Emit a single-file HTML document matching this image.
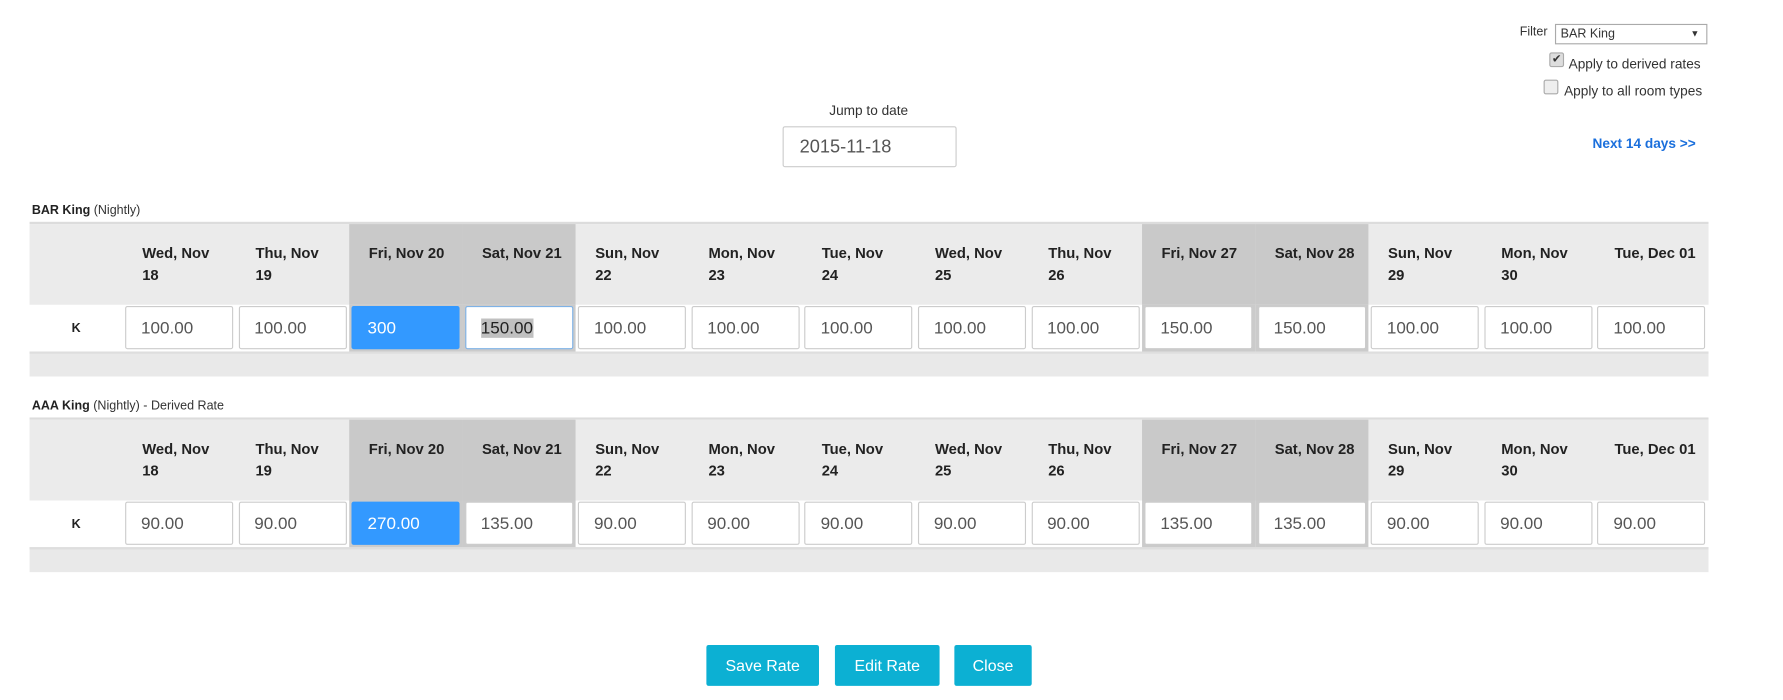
<!DOCTYPE html>
<html><head><meta charset="utf-8">
<style>
html,body{margin:0;padding:0;background:#fff;width:1783px;height:699px;overflow:hidden}
#w{position:absolute;left:0;top:0;width:1568px;height:615px;transform:scale(1.1375);transform-origin:0 0;font-family:"Liberation Sans",sans-serif;color:#333}
.a{position:absolute}
.lbl{font-size:11px;color:#333}
.lbl b{color:#222}
.tbl{position:absolute;left:26px;width:1476px}
.bt{height:2px;background:#dcdcdc}
.hr,.rr{display:flex}
.hr{height:71px;background:#ebebeb}
.rr{height:41px;background:#fff}
.c0{width:82px;flex:none}
.c{width:99.57px;flex:none;position:relative}
.hr .c{box-sizing:border-box;padding:16px 0 0 17px;font-size:13px;font-weight:bold;line-height:19px;color:#222;white-space:nowrap}
.we{background:#c9c9c9}
.rr .c.we{background:#cbcbcb}
.in{position:absolute;left:2px;top:1px;width:95px;height:38px;box-sizing:border-box;border:1px solid #ccc;border-radius:2px;background:#fff;font-size:15px;color:#555;padding:10px 0 0 13px}
.in.sel{background:#3399ff;border-color:#3399ff;color:#fff}
.in.foc{border-color:#7fb2e6}
.in.foc span{background:#c0c0c0;color:#222}
.k{font-size:11px;font-weight:bold;color:#222;padding:15px 0 0 37px;box-sizing:border-box}
.band{height:22px;background:#e9e9e9;border-top:2px solid #dedede;box-sizing:border-box}
.btn{position:absolute;top:567px;height:36px;background:#0cb0d3;color:#fff;font-size:14px;border-radius:2px;text-align:center;line-height:36px}
</style></head><body><div id="w">

<div class="a" style="left:1336px;top:22px;font-size:11px;">Filter</div>
<div class="a" style="left:1367px;top:21px;height:16px;border:1px solid #aaa;font-size:11px;line-height:16px;padding-left:4px;box-sizing:content-box;width:128px">BAR King<span style="position:absolute;right:6px;top:0;font-size:8px">&#9660;</span></div>
<div class="a" style="left:1362px;top:46px;width:11px;height:11px;border:1px solid #aaa;border-radius:2px;background:#ddd;font-size:10px;line-height:11px;text-align:center;color:#333">&#10004;</div>
<div class="a" style="left:1379px;top:49px;font-size:12px">Apply to derived rates</div>
<div class="a" style="left:1357px;top:70px;width:11px;height:11px;border:1px solid #aaa;border-radius:2px;background:#eee"></div>
<div class="a" style="left:1375px;top:73px;font-size:12px">Apply to all room types</div>
<div class="a" style="left:1400px;top:119px;font-size:12px;font-weight:bold;color:#1a6fdc">Next 14 days &gt;&gt;</div>

<div class="a" style="left:729px;top:90px;font-size:12px">Jump to date</div>
<div class="a" style="left:688px;top:111px;width:153px;height:36px;box-sizing:border-box;border:1px solid #ccc;border-radius:2px;font-size:16px;color:#555;padding:9px 0 0 14px">2015-11-18</div>

<div class="a lbl" style="left:28px;top:179px"><b>BAR King</b> (Nightly)</div>
<div class="tbl" style="top:195px">
<div class="bt"></div>
<div class="hr"><div class="c0"></div>
<div class="c">Wed, Nov<br>18</div><div class="c">Thu, Nov<br>19</div><div class="c we">Fri, Nov 20</div><div class="c we">Sat, Nov 21</div><div class="c">Sun, Nov<br>22</div><div class="c">Mon, Nov<br>23</div><div class="c">Tue, Nov<br>24</div><div class="c">Wed, Nov<br>25</div><div class="c">Thu, Nov<br>26</div><div class="c we">Fri, Nov 27</div><div class="c we">Sat, Nov 28</div><div class="c">Sun, Nov<br>29</div><div class="c">Mon, Nov<br>30</div><div class="c">Tue, Dec 01</div>
</div>
<div class="rr"><div class="c0 k">K</div>
<div class="c"><div class="in">100.00</div></div><div class="c"><div class="in">100.00</div></div><div class="c we"><div class="in sel">300</div></div><div class="c we"><div class="in foc"><span>150.00</span></div></div><div class="c"><div class="in">100.00</div></div><div class="c"><div class="in">100.00</div></div><div class="c"><div class="in">100.00</div></div><div class="c"><div class="in">100.00</div></div><div class="c"><div class="in">100.00</div></div><div class="c we"><div class="in">150.00</div></div><div class="c we"><div class="in">150.00</div></div><div class="c"><div class="in">100.00</div></div><div class="c"><div class="in">100.00</div></div><div class="c"><div class="in">100.00</div></div>
</div>
<div class="band"></div>
</div>

<div class="a lbl" style="left:28px;top:351px"><b>AAA King</b> (Nightly) - Derived Rate</div>
<div class="tbl" style="top:367px">
<div class="bt"></div>
<div class="hr"><div class="c0"></div>
<div class="c">Wed, Nov<br>18</div><div class="c">Thu, Nov<br>19</div><div class="c we">Fri, Nov 20</div><div class="c we">Sat, Nov 21</div><div class="c">Sun, Nov<br>22</div><div class="c">Mon, Nov<br>23</div><div class="c">Tue, Nov<br>24</div><div class="c">Wed, Nov<br>25</div><div class="c">Thu, Nov<br>26</div><div class="c we">Fri, Nov 27</div><div class="c we">Sat, Nov 28</div><div class="c">Sun, Nov<br>29</div><div class="c">Mon, Nov<br>30</div><div class="c">Tue, Dec 01</div>
</div>
<div class="rr"><div class="c0 k">K</div>
<div class="c"><div class="in">90.00</div></div><div class="c"><div class="in">90.00</div></div><div class="c we"><div class="in sel">270.00</div></div><div class="c we"><div class="in">135.00</div></div><div class="c"><div class="in">90.00</div></div><div class="c"><div class="in">90.00</div></div><div class="c"><div class="in">90.00</div></div><div class="c"><div class="in">90.00</div></div><div class="c"><div class="in">90.00</div></div><div class="c we"><div class="in">135.00</div></div><div class="c we"><div class="in">135.00</div></div><div class="c"><div class="in">90.00</div></div><div class="c"><div class="in">90.00</div></div><div class="c"><div class="in">90.00</div></div>
</div>
<div class="band"></div>
</div>

<div class="btn" style="left:621px;width:99px">Save Rate</div>
<div class="btn" style="left:734px;width:92px">Edit Rate</div>
<div class="btn" style="left:839px;width:68px">Close</div>

</div></body></html>
